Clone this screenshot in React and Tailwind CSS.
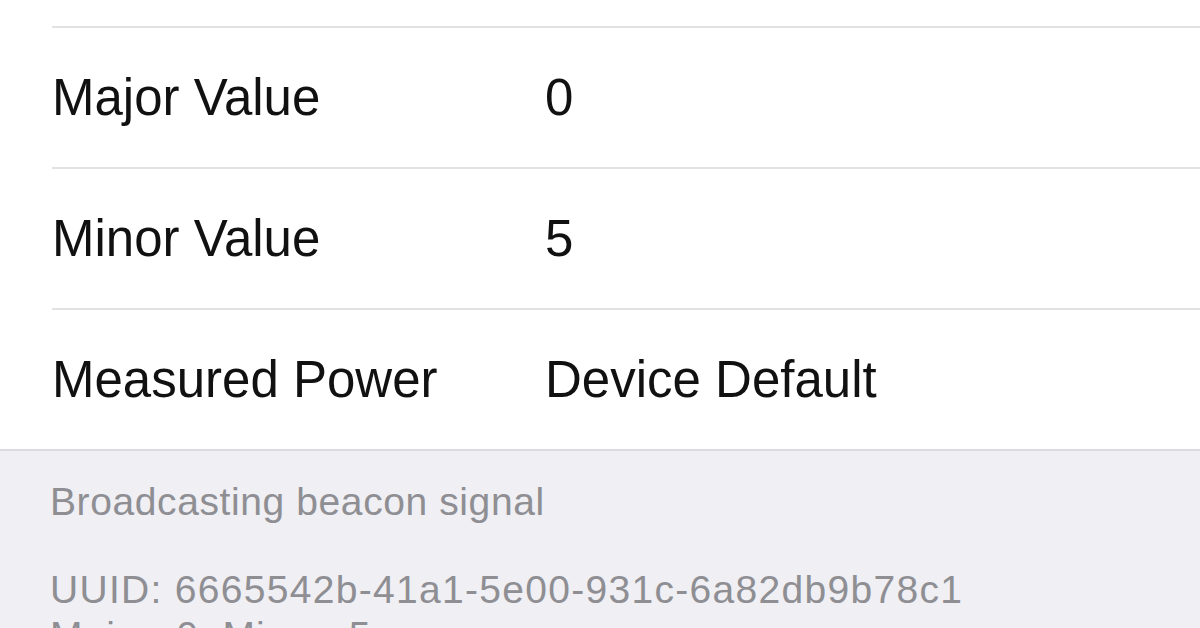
import React from 'react';

const rows = [
  { label: 'Major Value', value: '0' },
  { label: 'Minor Value', value: '5' },
  { label: 'Measured Power', value: 'Device Default' },
];

export default function App() {
  return (
    <div className="w-[1200px] h-[628px] overflow-hidden bg-white font-['Liberation_Sans',Arial,sans-serif]">
      <div className="h-[26px]" />
      <div className="pl-[52px]">
        {rows.map((r) => (
          <div key={r.label} className="h-[141px] border-t-2 border-[#e2e2e4] flex items-center pt-[2px] text-[51px] text-[#111]">
            <span className="w-[493px]">{r.label}</span>
            <span>{r.value}</span>
          </div>
        ))}
      </div>
      <div className="border-t-2 border-[#dcdce0] bg-[#efeff4] pl-[50px] pt-[28px] text-[39px] leading-[46px] text-[#8e8e93]">
        <p className="tracking-[0.6px]">Broadcasting beacon signal</p>
        <p className="mt-[42px] tracking-[1.3px]">UUID: 6665542b-41a1-5e00-931c-6a82db9b78c1</p>
        <p className="tracking-[1px]">Major: 0, Minor: 5</p>
      </div>
    </div>
  );
}
